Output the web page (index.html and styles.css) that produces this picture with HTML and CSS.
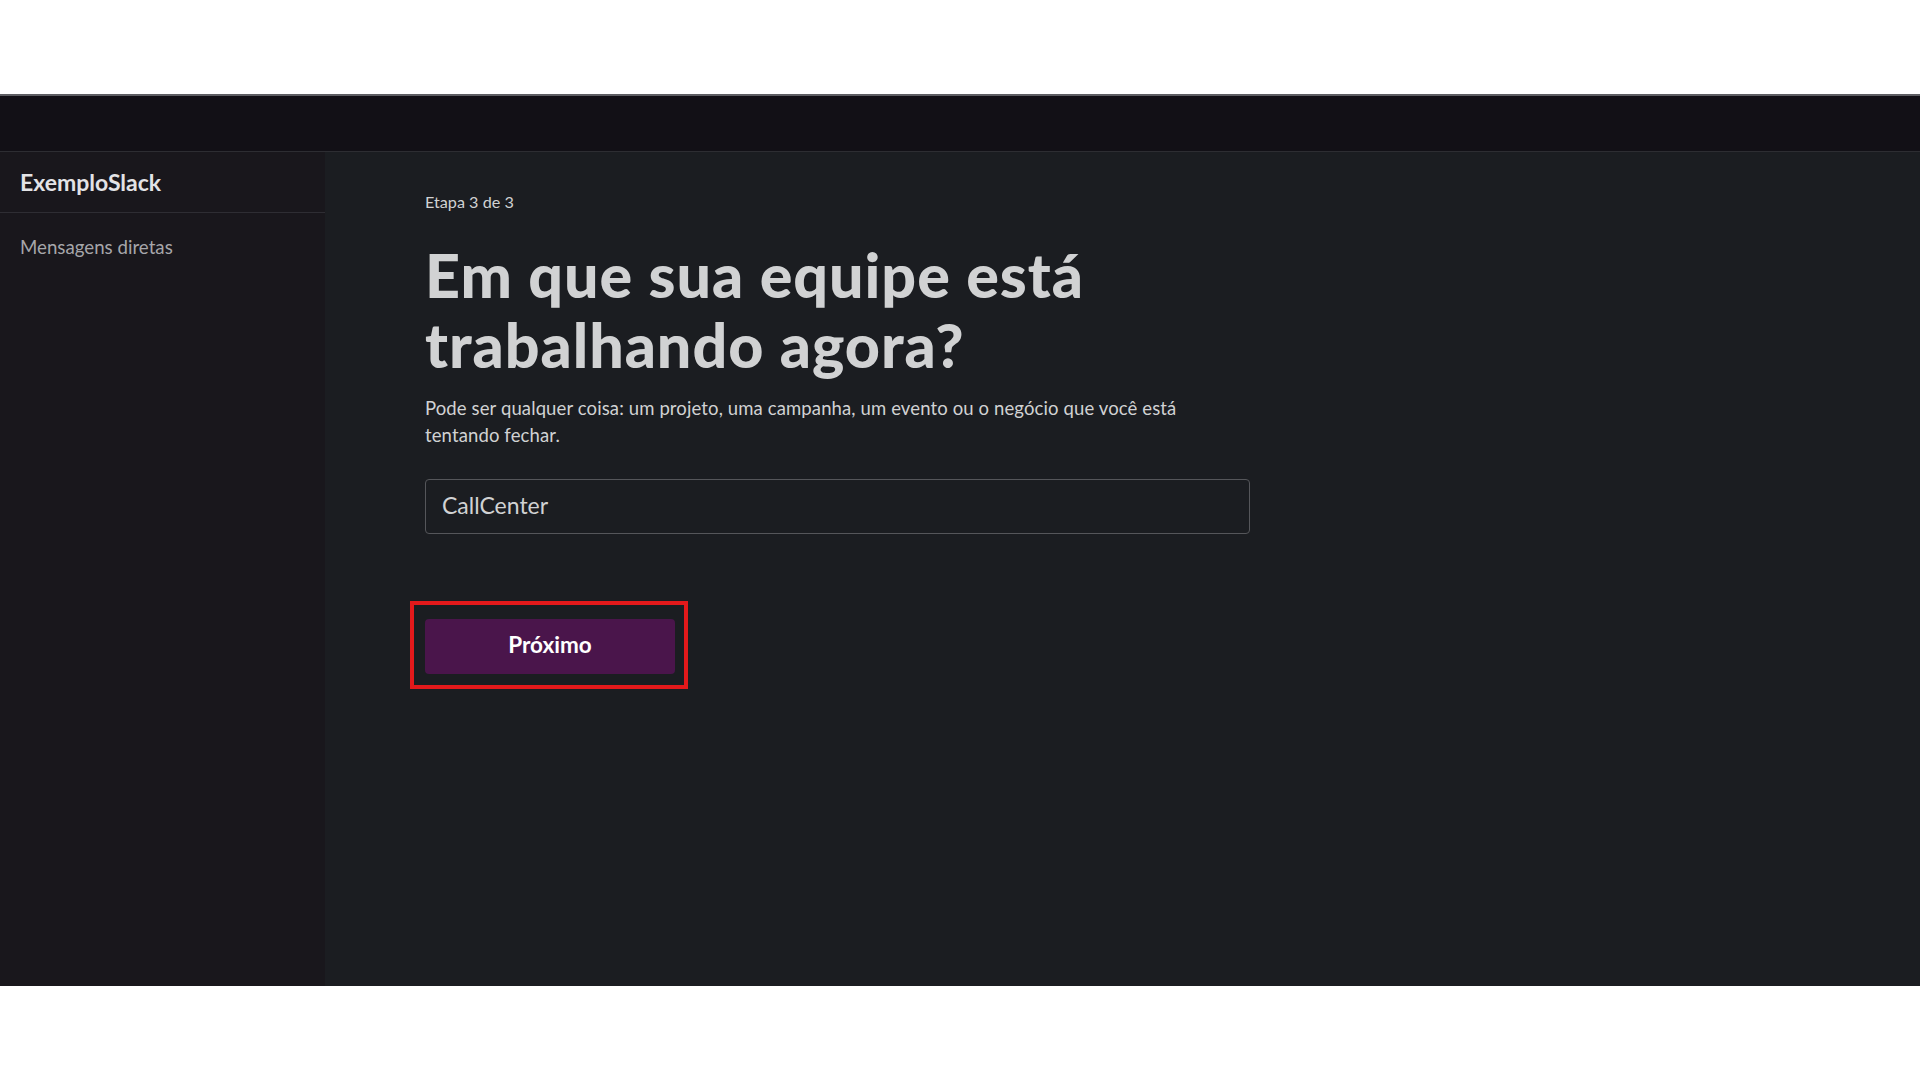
FILE: index.html
```html
<!DOCTYPE html>
<html lang="pt-BR">
<head>
<meta charset="utf-8">
<title>ExemploSlack</title>
<link rel="stylesheet" href="styles.css">
</head>
<body>
<div class="window">
  <div class="topbar"></div>
  <div class="workspace">
    <aside class="sidebar">
      <div class="brand">ExemploSlack</div>
      <div class="nav-item">Mensagens diretas</div>
    </aside>
    <main class="main">
      <div class="step">Etapa 3 de 3</div>
      <h1 class="title">Em que sua equipe está<br>trabalhando agora?</h1>
      <p class="desc">Pode ser qualquer coisa: um projeto, uma campanha, um evento ou o negócio que você está tentando fechar.</p>
      <div class="field">CallCenter</div>
      <div class="btn-wrap">
        <button class="btn">Próximo</button>
        <span class="highlight"></span>
      </div>
    </main>
  </div>
</div>
</body>
</html>
```

FILE: styles.css
```css
html, body {
  margin: 0;
  padding: 0;
  background: #ffffff;
}
body {
  font-family: "Lato", "Liberation Sans", sans-serif;
  width: 1920px;
  height: 1080px;
  overflow: hidden;
}
.window {
  margin-top: 94px;
  height: 892px;
  display: flex;
  flex-direction: column;
  border-top: 2px solid #5d5d62;
  box-sizing: border-box;
}
.topbar {
  height: 55px;
  background: #121016;
  border-bottom: 1px solid #2d2d32;
  flex: none;
}
.workspace {
  flex: 1;
  display: flex;
  min-height: 0;
}
.sidebar {
  width: 325px;
  flex: none;
  background: #19171c;
}
.brand {
  height: 61px;
  display: flex;
  align-items: center;
  padding-left: 20px;
  box-sizing: border-box;
  border-bottom: 1px solid #2e2d33;
  color: #e3e3e6;
  font-weight: 700;
  font-size: 23px;
  letter-spacing: 0;
}
.nav-item {
  padding: 20px 0 0 20px;
  color: #a6a6aa;
  font-size: 18.7px;
  line-height: 28px;
}
.main {
  flex: 1;
  background: #1b1d21;
  padding: 38px 0 0 100px;
  color: #d1d2d3;
}
.step {
  font-size: 16.2px;
  line-height: 24px;
  color: #d1d2d3;
}
.title {
  margin: 26px 0 0 0;
  font-size: 61px;
  line-height: 70px;
  font-weight: 900;
  letter-spacing: 0.95px;
  color: #d1d2d3;
}
.desc {
  margin: 15px 0 0 0;
  width: 800px;
  font-size: 18.5px;
  line-height: 27px;
  letter-spacing: 0.12px;
  color: #d1d2d3;
}
.field {
  margin-top: 30px;
  width: 825px;
  height: 55px;
  box-sizing: border-box;
  border: 1px solid #55565a;
  border-radius: 4px;
  padding: 0 16px 4px 16px;
  display: flex;
  align-items: center;
  font-size: 23px;
  color: #d1d2d3;
}
.btn-wrap {
  position: relative;
  margin-top: 85px;
  width: 250px;
  height: 55px;
}
.btn {
  width: 250px;
  height: 55px;
  border: none;
  border-radius: 4px;
  background: #4a154b;
  color: #ffffff;
  font-family: "Lato", "Liberation Sans", sans-serif;
  font-weight: 700;
  font-size: 22.5px;
  padding: 0 0 4px 0;
}
.highlight {
  position: absolute;
  top: -18px;
  left: -15px;
  right: -13px;
  bottom: -15px;
  border: 4px solid #e3191b;
  pointer-events: none;
}
```
